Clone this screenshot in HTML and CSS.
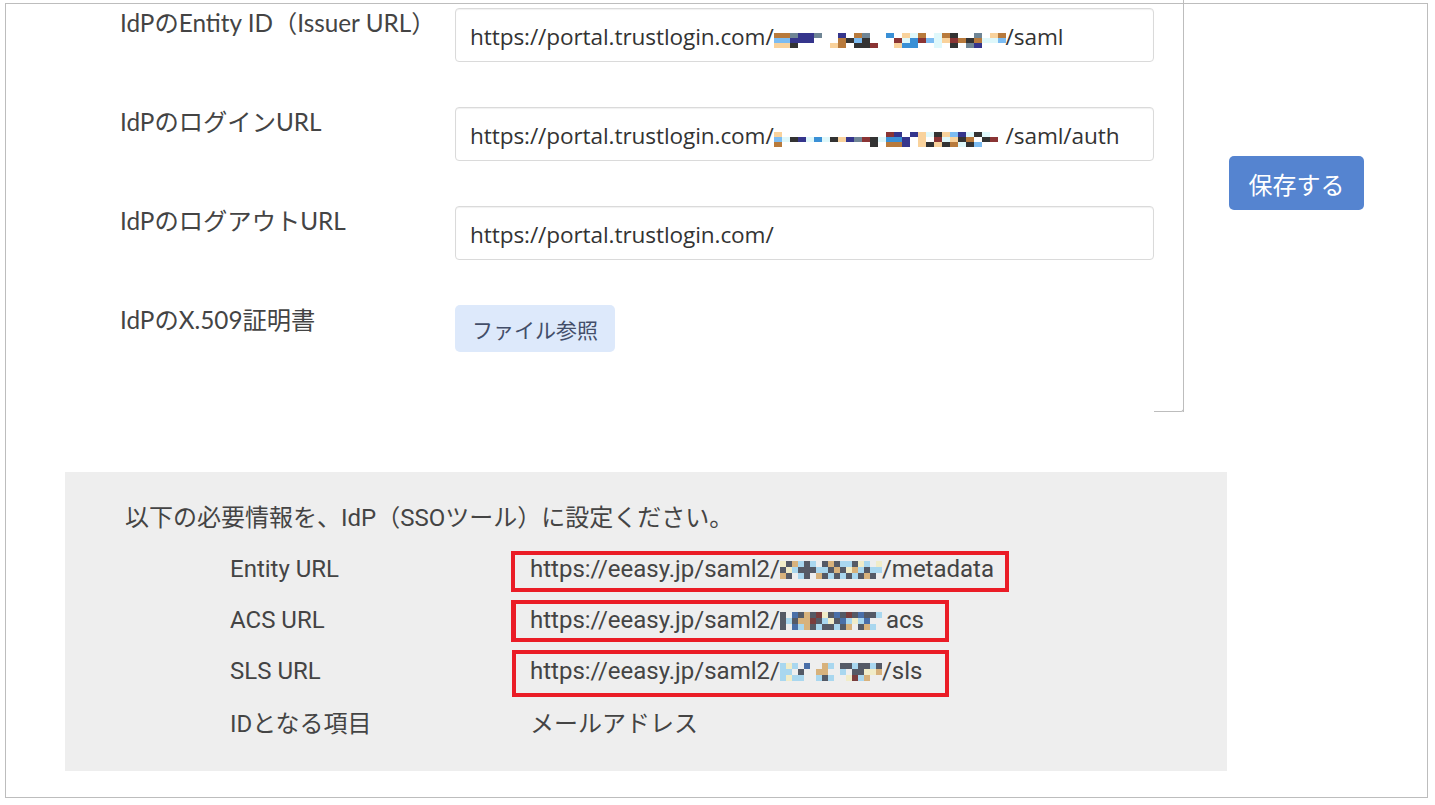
FILE: index.html
```
<!DOCTYPE html>
<html lang="ja">
<head>
<meta charset="utf-8">
<title>SAML設定</title>
<link rel="stylesheet" href="styles.css">
</head>
<body>
<div class="frame">
  <div class="top">
    <div class="card">
      <div class="row">
        <div class="label">IdPのEntity ID（Issuer URL）</div>
        <div class="input">https://portal.trustlogin.com/<span class="mz"><i class="b"></i><i class="l"></i><i class="y"></i><i class="b"></i><i class="l"></i><i class="y"></i><i class="g"></i><i class="n"></i><i class="k"></i><i class="n"></i><i class="n"></i><i></i><i class="n"></i><i class="n"></i><i></i><i class="g"></i><i></i><i></i><i></i><i></i><i></i><i></i><i></i><i class="y"></i><i class="n"></i><i class="b"></i><i class="b"></i><i></i><i class="k"></i><i></i><i class="b"></i><i class="l"></i><i class="k"></i><i class="g"></i><i class="k"></i><i class="k"></i><i></i><i></i><i class="m"></i><i></i><i></i><i></i><i class="u"></i><i></i><i></i><i></i><i class="m"></i><i class="y"></i><i class="y"></i><i class="c"></i><i class="u"></i><i class="c"></i><i class="u"></i><i class="u"></i><i class="b"></i><i class="m"></i><i></i><i></i><i class="l"></i><i></i><i class="c"></i><i class="c"></i><i class="c"></i><i class="b"></i><i class="y"></i><i></i><i class="k"></i><i class="m"></i><i class="k"></i><i></i><i class="b"></i><i></i><i></i><i class="k"></i><i class="g"></i><i class="g"></i><i class="b"></i><i class="n"></i><i></i><i class="c"></i><i></i><i class="y"></i><i class="c"></i><i></i><i class="b"></i><i class="l"></i><i></i></span>/saml</div>
      </div>
      <div class="row">
        <div class="label">IdPのログインURL</div>
        <div class="input">https://portal.trustlogin.com/<span class="mz"><i class="y"></i><i class="l"></i><i class="b"></i><i></i><i class="c"></i><i></i><i></i><i class="k"></i><i></i><i></i><i class="n"></i><i></i><i></i><i class="c"></i><i></i><i></i><i class="u"></i><i></i><i></i><i class="c"></i><i></i><i></i><i class="k"></i><i></i><i></i><i class="y"></i><i></i><i></i><i class="n"></i><i></i><i></i><i class="g"></i><i></i><i></i><i class="m"></i><i></i><i></i><i class="k"></i><i class="k"></i><i></i><i class="c"></i><i></i><i class="m"></i><i class="u"></i><i class="b"></i><i class="n"></i><i class="u"></i><i class="b"></i><i></i><i class="n"></i><i class="n"></i><i class="n"></i><i></i><i></i><i class="y"></i><i class="y"></i><i class="y"></i><i class="c"></i><i></i><i class="k"></i><i class="k"></i><i class="m"></i><i class="y"></i><i class="y"></i><i class="c"></i><i class="k"></i><i class="l"></i><i class="y"></i><i class="b"></i><i class="n"></i><i class="k"></i><i class="c"></i><i class="c"></i><i class="b"></i><i class="k"></i><i class="k"></i><i></i><i class="l"></i><i class="c"></i><i class="k"></i><i></i><i></i><i class="m"></i><i></i><i></i><i></i></span>/saml/auth</div>
      </div>
      <div class="row">
        <div class="label">IdPのログアウトURL</div>
        <div class="input">https://portal.trustlogin.com/</div>
      </div>
      <div class="row row-last">
        <div class="label">IdPのX.509証明書</div>
        <div><button class="file-btn" type="button">ファイル参照</button></div>
      </div>
    </div>
    <div class="side">
      <button class="save" type="button">保存する</button>
    </div>
  </div>

  <div class="panel">
    <p class="lead">以下の必要情報を、IdP（SSOツール）に設定ください。</p>
    <div class="info">
      <div class="info-row"><span class="k">Entity URL</span><span class="v">https://eeasy.jp/saml2/<span class="mz2"><i class="p"></i><i class="d"></i><i class="t"></i><i class="d"></i><i class="p"></i><i class="d"></i><i class="t"></i><i class="s"></i><i></i><i class="s"></i><i class="d"></i><i class="s"></i><i class="d"></i><i class="d"></i><i class="d"></i><i class="s"></i><i class="d"></i><i></i><i></i><i class="s"></i><i class="t"></i><i class="d"></i><i class="s"></i><i class="d"></i><i class="t"></i><i class="d"></i><i class="s"></i><i class="d"></i><i class="t"></i><i class="d"></i><i class="s"></i><i class="d"></i><i class="s"></i><i class="s"></i><i class="p"></i><i class="d"></i><i class="d"></i><i class="t"></i><i class="s"></i><i class="p"></i><i class="s"></i><i class="d"></i><i class="s"></i><i class="d"></i><i class="t"></i><i></i><i class="s"></i><i class="d"></i><i class="p"></i><i class="s"></i><i></i></span>/metadata</span></div>
      <div class="info-row"><span class="k">ACS URL</span><span class="v">https://eeasy.jp/saml2/<span class="mz2"><i class="d"></i><i class="d"></i><i class="d"></i><i></i><i class="s"></i><i></i><i class="b"></i><i class="d"></i><i class="b"></i><i class="d"></i><i class="t"></i><i class="s"></i><i class="t"></i><i class="t"></i><i class="t"></i><i class="d"></i><i class="r"></i><i class="d"></i><i class="r"></i><i class="d"></i><i class="s"></i><i class="p"></i><i class="s"></i><i class="d"></i><i class="d"></i><i class="p"></i><i class="d"></i><i class="b"></i><i class="d"></i><i class="s"></i><i class="d"></i><i class="b"></i><i class="d"></i><i class="r"></i><i class="s"></i><i class="t"></i><i class="d"></i><i class="p"></i><i></i><i class="b"></i><i class="s"></i><i class="d"></i><i class="d"></i><i class="b"></i><i class="t"></i><i class="d"></i><i></i><i class="s"></i><i class="s"></i><i></i><i></i></span><span class="gap">acs</span></span></div>
      <div class="info-row"><span class="k">SLS URL</span><span class="v">https://eeasy.jp/saml2/<span class="mz2"><i class="s"></i><i class="s"></i><i class="s"></i><i class="p"></i><i class="s"></i><i class="p"></i><i class="s"></i><i></i><i class="s"></i><i></i><i class="d"></i><i class="s"></i><i class="b"></i><i></i><i></i><i></i><i></i><i></i><i></i><i class="t"></i><i class="s"></i><i class="t"></i><i class="t"></i><i class="d"></i><i class="s"></i><i></i><i class="s"></i><i></i><i></i><i></i><i class="d"></i><i class="s"></i><i></i><i class="d"></i><i></i><i class="p"></i><i class="s"></i><i class="d"></i><i class="r"></i><i class="d"></i><i class="d"></i><i class="s"></i><i class="d"></i><i class="p"></i><i class="t"></i><i class="s"></i><i class="p"></i><i></i><i class="d"></i><i class="t"></i><i></i></span>/sls</span></div>
      <div class="info-row"><span class="k">IDとなる項目</span><span class="v">メールアドレス</span></div>
    </div>
    <div class="mark mark-1"></div>
    <div class="mark mark-2"></div>
    <div class="mark mark-3"></div>
  </div>
</div>
</body>
</html>
```

FILE: styles.css
```
html, body {
  margin: 0;
  padding: 0;
  background: #ffffff;
}

body {
  font-family: "Lato", "Noto Sans CJK JP", sans-serif;
  color: #444444;
}

.frame {
  box-sizing: border-box;
  width: 1423px;
  height: 795px;
  margin: 3px 0 0 5px;
  border: 1px solid #bdbdbd;
}

.top {
  display: flex;
  align-items: flex-start;
}

.card {
  position: relative;
  box-sizing: border-box;
  width: 1178px;
  height: 412px;
  margin-top: -4px;
  padding: 8px 0 60px 114px;
  border-right: 1px solid #bdbdbd;
}

.card::after {
  content: "";
  position: absolute;
  right: -1px;
  bottom: 0;
  width: 29px;
  height: 4px;
  border-right: 1px solid #bdbdbd;
  border-bottom: 1px solid #bdbdbd;
  border-bottom-right-radius: 3px;
}

.row {
  display: grid;
  grid-template-columns: 335px 699px;
  align-items: start;
  height: 99px;
}

.row-last {
  height: 47px;
}

.label {
  font-family: "Lato", "Noto Sans CJK JP", sans-serif;
  font-size: 24.3px;
  line-height: 36px;
  margin-top: -3px;
  color: #444444;
  white-space: nowrap;
}

.input {
  box-sizing: border-box;
  height: 54px;
  display: flex;
  align-items: center;
  padding: 2px 14px 0 14px;
  border: 1px solid #dadada;
  border-radius: 4px;
  box-shadow: inset 0 1px 1px rgba(0, 0, 0, 0.06);
  font-family: "Open Sans", "Noto Sans CJK JP", sans-serif;
  font-size: 22.6px;
  color: #333333;
  white-space: nowrap;
  letter-spacing: -0.1px;
}

.mz {
  display: inline-grid;
  grid-auto-flow: column;
  grid-template-rows: repeat(3, 5px);
  grid-auto-columns: 8px;
  margin-top: 8px;
}

.mz i, .mz2 i {
  display: block;
}

.mz .k { background: #333333; }
.mz .n { background: #35358c; }
.mz .b { background: #b87a3c; }
.mz .l { background: #7cbcf2; }
.mz .g { background: #6f8595; }
.mz .y { background: #f9d29c; }
.mz .m { background: #8a3434; }
.mz .c { background: #dff8fb; }
.mz .u { background: #3a90d6; }

.file-btn {
  box-sizing: border-box;
  width: 160px;
  height: 47px;
  padding: 0;
  border: none;
  border-radius: 5px;
  background: #dde9fb;
  font-family: "Noto Sans CJK JP", sans-serif;
  font-size: 21px;
  color: #434e69;
}

.side {
  padding: 152px 0 0 45px;
}

.save {
  box-sizing: border-box;
  width: 135px;
  height: 54px;
  padding: 0;
  border: none;
  border-radius: 5px;
  background: #5584d0;
  font-family: "Noto Sans CJK JP", sans-serif;
  font-size: 24px;
  color: #ffffff;
}

.panel {
  position: relative;
  box-sizing: border-box;
  width: 1162px;
  height: 299px;
  margin: 60px 0 0 59px;
  padding: 28px 0 0 60px;
  background: #eeeeee;
  font-family: "Roboto", "Noto Sans CJK JP", sans-serif;
  color: #444444;
}

.lead {
  margin: 0;
  font-size: 24px;
  line-height: 36px;
  white-space: nowrap;
}

.info {
  margin-top: 7px;
  padding-left: 105px;
}

.info-row {
  display: grid;
  grid-template-columns: 300px auto;
  align-items: center;
  height: 51px;
  font-size: 24px;
  white-space: nowrap;
}

.info-row:last-child {
  height: 50px;
}

.v {
  display: flex;
  align-items: center;
}

.gap {
  margin-left: 4px;
}

.mz2 {
  display: inline-grid;
  grid-auto-flow: column;
  grid-template-rows: repeat(3, 6px);
  grid-auto-columns: 6px;
  margin-top: 2px;
}

.mz2 .d { background: #555a66; }
.mz2 .s { background: #a9d7ef; }
.mz2 .t { background: #d8b27c; }
.mz2 .p { background: #f1ecc8; }
.mz2 .b { background: #4a6fa8; }
.mz2 .r { background: #7a3d3d; }

.mark {
  position: absolute;
  box-sizing: border-box;
  border: 4px solid #ea1c26;
}

.mark-1 {
  left: 446px;
  top: 79px;
  width: 498px;
  height: 41px;
}

.mark-2 {
  left: 446px;
  top: 128px;
  width: 438px;
  height: 42px;
  border-left-width: 5px;
}

.mark-3 {
  left: 447px;
  top: 178px;
  width: 437px;
  height: 47px;
}
```
